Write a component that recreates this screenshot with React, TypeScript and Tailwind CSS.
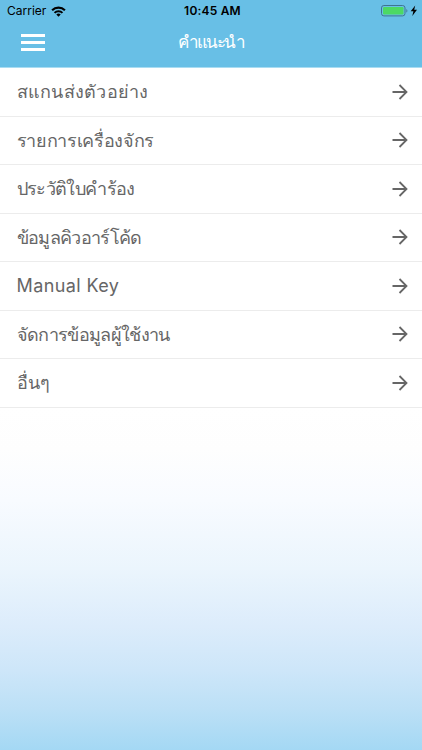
import type { ReactNode } from "react";

const items = [
  { title: "สแกนส่งตัวอย่าง", style: "tracking-[0.25px]" },
  { title: "รายการเครื่องจักร", style: "tracking-[-0.33px]" },
  { title: "ประวัติใบคำร้อง", style: "tracking-[-0.62px]" },
  { title: "ข้อมูลคิวอาร์โค้ด", style: "tracking-[-0.65px]" },
  { title: "Manual Key", style: "font-['Inter',sans-serif] tracking-[0.4px]" },
  { title: "จัดการข้อมูลผู้ใช้งาน", style: "tracking-[-0.65px]" },
  { title: "อื่นๆ", style: "tracking-normal" },
];

function WifiIcon() {
  return (
    <svg width="15" height="11" viewBox="0 0 16 12" fill="none" stroke="#000" strokeWidth="2.3">
      <path d="M1 4.7a9.9 9.9 0 0 1 14 0" />
      <path d="M3.7 7.5a6.1 6.1 0 0 1 8.6 0" />
      <path d="M8 11.8 5.6 9.4a3.4 3.4 0 0 1 4.8 0Z" fill="#000" stroke="none" />
    </svg>
  );
}

function BatteryIcon() {
  return (
    <svg width="37" height="12" viewBox="0 0 37 12">
      <rect x="0.5" y="0.5" width="23.5" height="10.4" rx="2.4" fill="none" stroke="#3f7590" />
      <rect x="2" y="2" width="20.5" height="7.4" rx="1.2" fill="#4cd964" />
      <path d="M25.4 4v3.6c1.3-.5 1.3-3.1 0-3.6Z" fill="#3f7590" />
      <path d="M34.2 0.4 29.7 6.3h2.7L31.3 11l4.7-6.2h-2.8Z" fill="#000" />
    </svg>
  );
}

function ArrowIcon() {
  return (
    <svg width="16" height="16" viewBox="0 0 16 16" fill="none" stroke="#666" strokeWidth="1.8">
      <path d="M0.5 8h14M7.5 1 14.5 8l-7 7" />
    </svg>
  );
}

function Row({ children }: { children: ReactNode }) {
  return (
    <li className="flex h-[48.5px] items-center justify-between border-b border-[#ececec] bg-white pr-[14px] pl-[16.5px]">
      {children}
      <ArrowIcon />
    </li>
  );
}

export default function App() {
  return (
    <div className="flex h-[750px] w-full flex-col overflow-hidden bg-white font-['Noto_Sans',sans-serif]">
      {/* Header */}
      <header className="h-[68px] shrink-0 border-b border-[#a9dcf2] bg-[#68bfe6]">
        <div className="grid h-[22px] grid-cols-3 items-center pr-1 pl-[7px] font-['Inter',sans-serif] text-black">
          <div className="flex items-center gap-[5px] text-[12px]">
            <span>Carrier</span>
            <WifiIcon />
          </div>
          <span className="text-center text-[12px] font-semibold tracking-[0.2px]">10:45 AM</span>
          <div className="flex justify-end">
            <BatteryIcon />
          </div>
        </div>
        <div className="grid h-[41px] grid-cols-3 items-center">
          <div className="ml-[21px] flex w-[24px] flex-col gap-1">
            <span className="h-[3px] bg-white" />
            <span className="h-[3px] bg-white" />
            <span className="h-[3px] bg-white" />
          </div>
          <h1 className="pb-0.5 text-center text-[17px] tracking-[-1.7px] whitespace-nowrap text-white">คำแนะนำ</h1>
        </div>
      </header>

      {/* Menu list */}
      <ul className="shrink-0">
        {items.map((item) => (
          <Row key={item.title}>
            <span className={`text-[18px] whitespace-nowrap text-[#666] ${item.style}`}>{item.title}</span>
          </Row>
        ))}
      </ul>

      <div className="flex-1 bg-[linear-gradient(to_bottom,#ffffff_0%,#fefefe_12%,#f8fbff_27%,#ebf5fd_47%,#dcecfb_64%,#cde6f9_77%,#bce0f6_88%,#a4d8f4_100%)]" />
    </div>
  );
}
